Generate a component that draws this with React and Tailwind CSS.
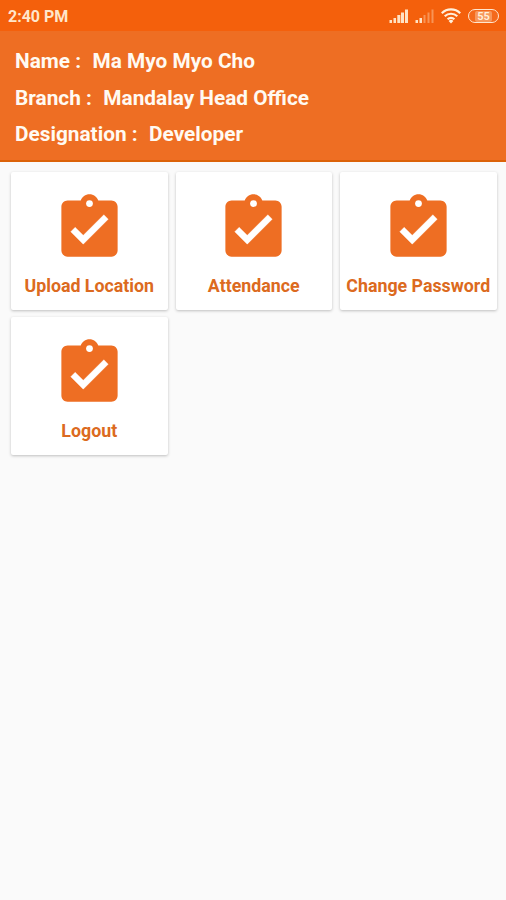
import React from 'react';

const profile = [
  { label: 'Name :', value: 'Ma Myo Myo Cho' },
  { label: 'Branch :', value: 'Mandalay Head Office' },
  { label: 'Designation :', value: 'Developer' },
];

const menuItems = ['Upload Location', 'Attendance', 'Change Password', 'Logout'];

const SignalFull = () => (
  <svg className="w-5 h-4" viewBox="0 0 20 16" fill="#ffe3c4">
    <rect x="0.5" y="12" width="2.5" height="3" />
    <rect x="4.5" y="10" width="2.5" height="5" />
    <rect x="8.3" y="7" width="3" height="8" />
    <rect x="12" y="4.5" width="3" height="10.5" />
    <rect x="16" y="1.5" width="3" height="13.5" />
  </svg>
);

const SignalWeak = () => (
  <svg className="w-5 h-4" viewBox="0 0 20 16" fill="#ffe3c4">
    <rect x="0.5" y="12" width="2.5" height="3" />
    <rect x="4.5" y="10" width="2.5" height="5" />
    <rect x="8.5" y="7" width="2" height="8" fillOpacity="0.4" />
    <rect x="12.5" y="4.5" width="2" height="10.5" fillOpacity="0.4" />
    <rect x="16.5" y="1.5" width="2" height="13.5" fillOpacity="0.4" />
  </svg>
);

const Wifi = () => (
  <svg className="w-5 h-4" viewBox="0 0 20 16" fill="none" stroke="#fff0dc" strokeWidth="2.2">
    <path d="M0.8 5.2a13 13 0 0 1 18.4 0" />
    <path d="M3.7 8.3a9 9 0 0 1 12.6 0" />
    <path d="M6.6 11.3a5 5 0 0 1 6.8 0" />
    <path d="M10 15.5l-2.4-2.6a3.6 3.6 0 0 1 4.8 0z" fill="#fff0dc" stroke="none" />
  </svg>
);

const ClipboardCheck = () => (
  <svg className="h-[75px] w-[75px] text-[#ee6e23]" viewBox="0 0 24 24" fill="currentColor">
    <path d="M19 3h-4.18C14.4 1.84 13.3 1 12 1s-2.4.84-2.82 2H5c-1.1 0-2 .9-2 2v14c0 1.1.9 2 2 2h14c1.1 0 2-.9 2-2V5c0-1.1-.9-2-2-2z" />
    <circle cx="12" cy="4" r="1.08" fill="#fff" />
    <path d="M10 17l-4-4 1.41-1.41L10 14.17l6.59-6.59L18 9z" fill="#fff" stroke="#fff" strokeWidth="0.1" />
  </svg>
);

const App = () => {
  return (
    <div className="h-[900px] w-[506px] overflow-hidden bg-[#fafafa] font-['Roboto',sans-serif]">
      <div className="flex h-[31px] items-center justify-between bg-[#f4600c] pl-2 pr-[7px] pt-px">
        <span className="pt-px text-[16px] font-bold leading-5 text-[#ffe6cb]">2:40 PM</span>
        <div className="flex items-center">
          <SignalFull />
          <div className="ml-[6px]">
            <SignalWeak />
          </div>
          <div className="ml-[6px]">
            <Wifi />
          </div>
          <div className="ml-[7px] flex h-[14px] w-[31px] items-center justify-center rounded-full border-[1.5px] border-[#ffe6cf] bg-[#f4691c] text-[11px] font-semibold leading-none text-[#fff0dc]">
            <span className="rounded-[2px] bg-[#f7975c] px-[2px]">55</span>
          </div>
        </div>
      </div>

      <div className="h-[131px] border-b-2 border-[#dc6209] bg-[#ee6e23] pl-[15px] pt-[12.5px]">
        {profile.map((row) => (
          <div key={row.label} className="flex h-[36.5px] items-center gap-[11.5px] text-[20.8px] font-bold text-[#fffaf2]">
            <span>{row.label}</span>
            <span>{row.value}</span>
          </div>
        ))}
      </div>

      <div className="grid grid-cols-3 gap-x-2 gap-y-[7px] pl-[11px] pr-[9.5px] pt-[10px]">
        {menuItems.map((item) => (
          <div
            key={item}
            className="flex h-[138px] flex-col items-center rounded-[2px] bg-white pt-[19px] shadow-[0_1px_3px_rgba(0,0,0,0.24)]"
          >
            <ClipboardCheck />
            <span className="mt-[8px] whitespace-nowrap text-[17.8px] font-bold leading-6 text-[#dc6a20]">{item}</span>
          </div>
        ))}
      </div>
    </div>
  );
};

export default App;
